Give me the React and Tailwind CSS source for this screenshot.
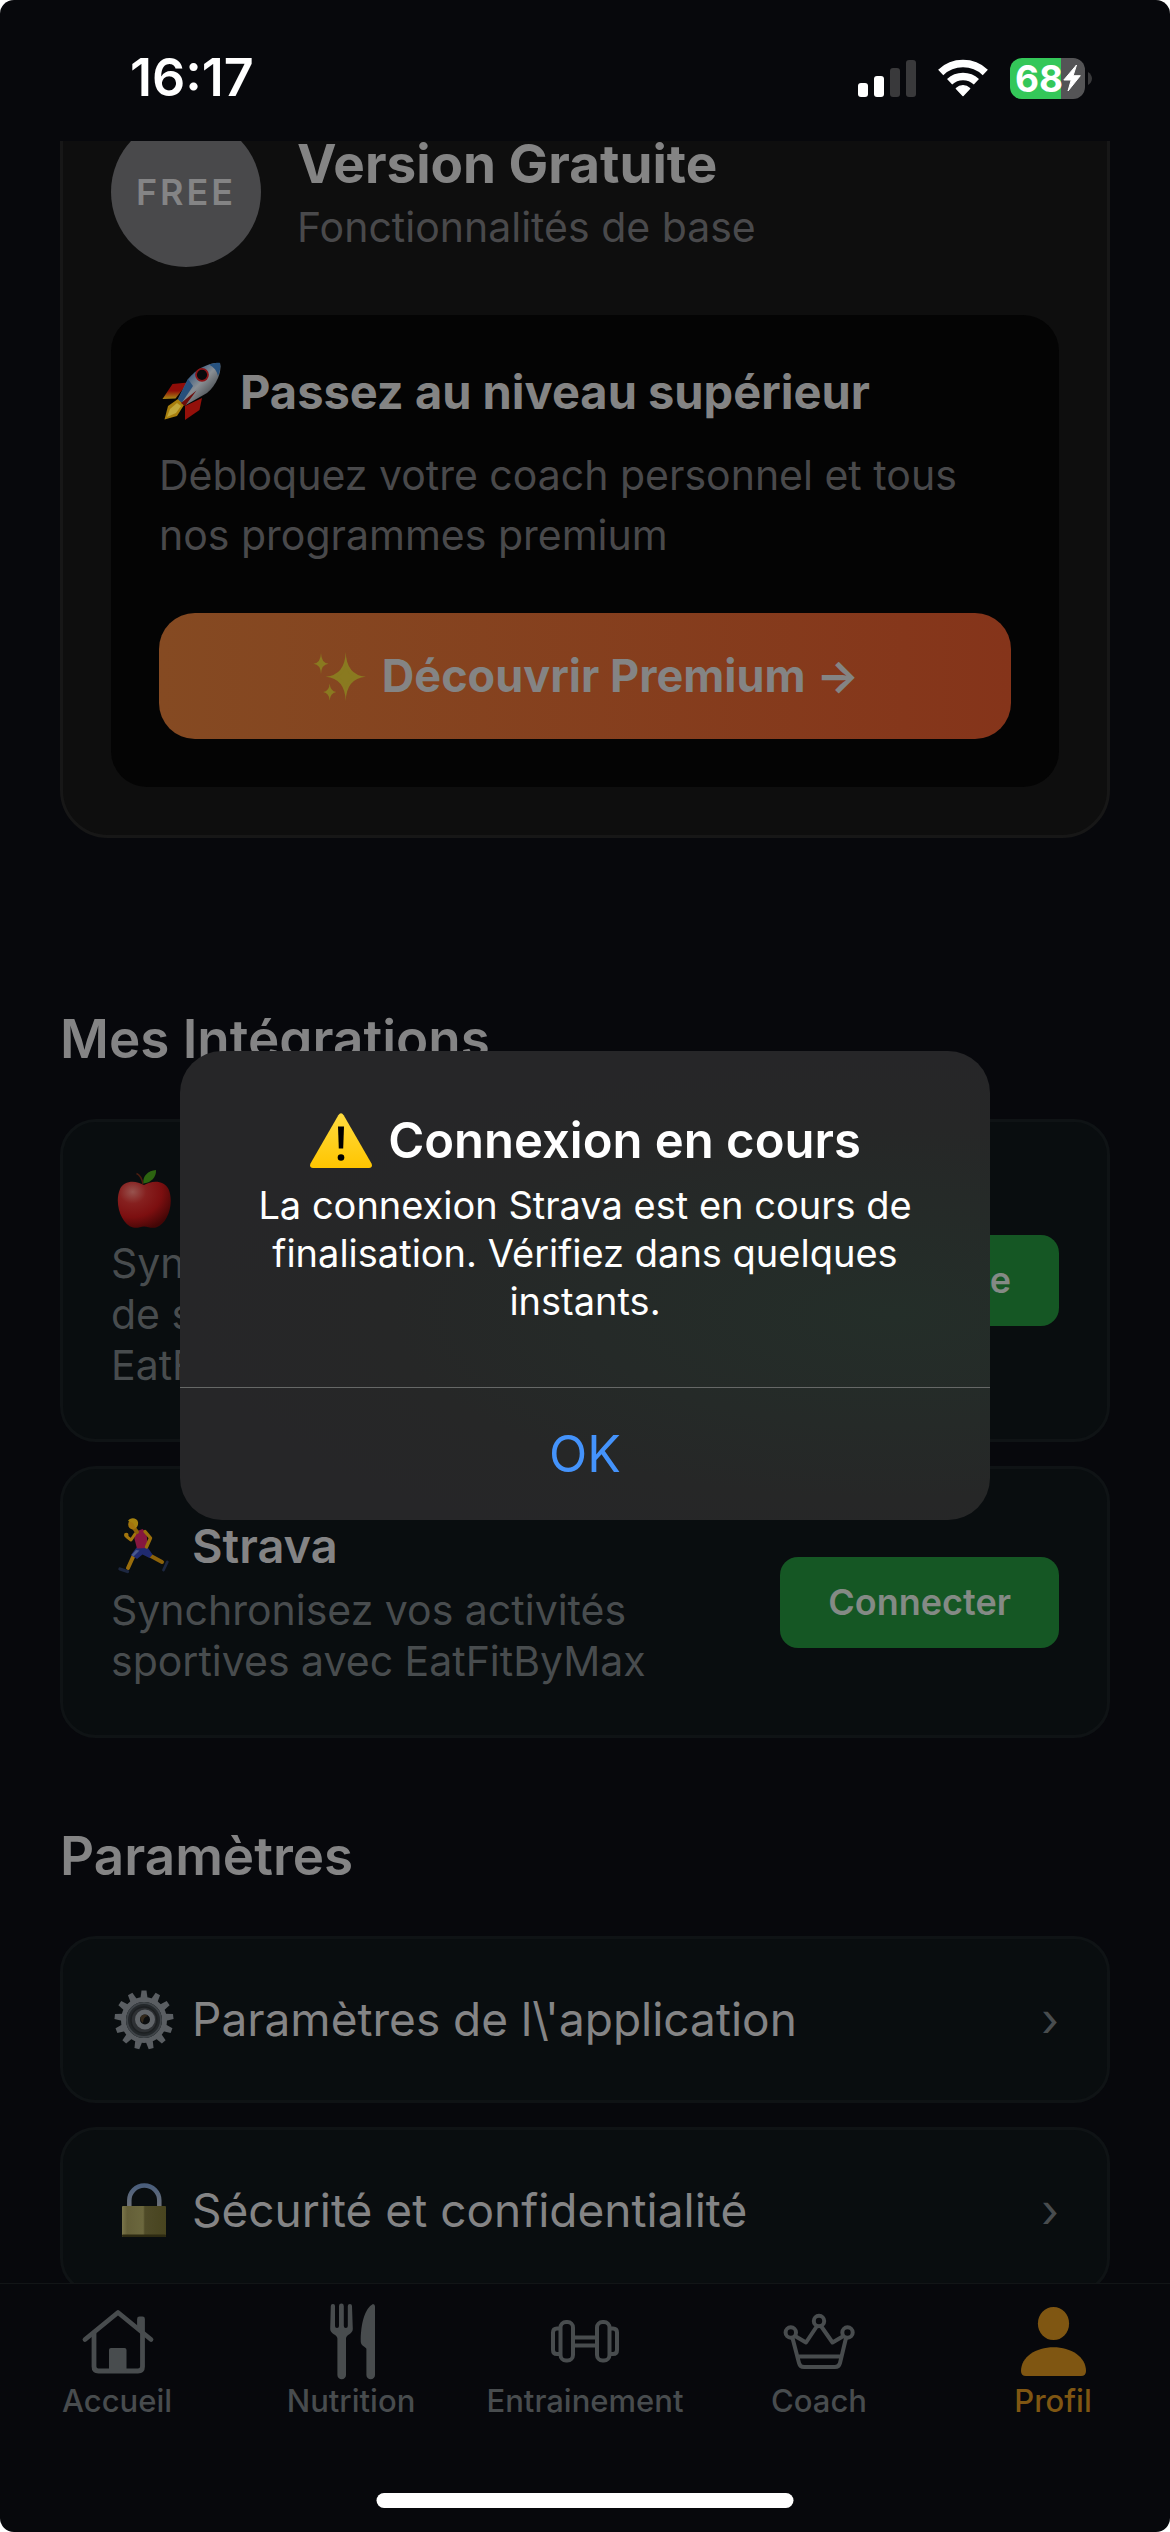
const TEETH = [0, 28, 55, 83, 111, 138, 166, 194, 222, 249, 277, 305, 332];

function SignalIcon() {
  return (
    <svg width="58" height="38" viewBox="0 0 58 38" fill="#fff" role="img" aria-label="Réseau">
      <rect x="0" y="24" width="10" height="14" rx="3" />
      <rect x="16" y="17" width="10" height="21" rx="3" />
      <rect x="32" y="9" width="10" height="29" rx="3" fill="#39393b" />
      <rect x="48" y="1" width="10" height="37" rx="3" fill="#39393b" />
    </svg>
  );
}

function WifiIcon() {
  return (
    <svg width="50" height="38" viewBox="0 0 50 38" fill="none" stroke="#fff" strokeWidth="7.5" role="img" aria-label="Wi-Fi">
      <path d="M2.7 13.4A32.5 32.5 0 0 1 47.3 13.4" />
      <path d="M11.6 22.8A19.5 19.5 0 0 1 38.4 22.8" />
      <path d="M25 36.4l-6.6-6.9a9.6 9.6 0 0 1 13.2 0z" fill="#fff" strokeWidth="1.5" strokeLinejoin="round" />
    </svg>
  );
}

function Battery() {
  return (
    <div className="flex items-center gap-[3px]" aria-label="Batterie 68 %">
      <div className="flex h-[41px] w-[75px] items-center justify-end rounded-[12px] bg-[linear-gradient(to_right,#34c759_68%,#545456_68%)] pr-1">
        <span className="text-[37px] leading-[41px] font-bold">68</span>
        <svg width="18" height="28" viewBox="0 0 18 28" fill="#fff" stroke="#fff" strokeWidth="1" strokeLinejoin="round">
          <path d="M13.5 1L.8 16h7.4L5 27 17.3 11.7h-7.2z" />
        </svg>
      </div>
      <svg width="4" height="13" viewBox="0 0 4 13" fill="#39393b">
        <path d="M0 0c2.500 1.500 4 4 4 6.500s-1.500 5-4 6.500z" />
      </svg>
    </div>
  );
}

function Rocket() {
  return (
    <svg width="64" height="60" viewBox="0 0 64 60" aria-hidden="true">
      <defs>
        <linearGradient id="rk-body" x1="0" y1="0" x2="1" y2="1">
          <stop offset=".25" stopColor="#2f547d" />
          <stop offset=".5" stopColor="#8a8f94" />
          <stop offset=".85" stopColor="#34383c" />
        </linearGradient>
        <linearGradient id="rk-fin" x1="0" y1="0" x2="0" y2="1">
          <stop offset=".5" stopColor="#8f0d08" />
          <stop offset="1" stopColor="#a88a14" />
        </linearGradient>
      </defs>
      <path d="M29 20.500L13.500 22 3.500 37l13-.5z" fill="url(#rk-fin)" />
      <path d="M43 36l-2.500 12L26 58V44z" fill="#94100a" />
      <path d="M19 37L9 44 5.500 57.500 18 54l7-11z" fill="#a87f0e" />
      <path d="M18 41l-7 6-3 8 9-4 5-7z" fill="#c2a93c" />
      <path d="M61 1C63 9 58 23 48 31L26 43.500 19 37 29 17C38 6 51 0 61 1z" fill="url(#rk-body)" />
      <path d="M50 2.500C55 1 60 .5 61 1c.8 4 0 9-2 13-1-5-4-9-9-11.500z" fill="#27527f" />
      <path d="M29 17l-10 20 4 3.500L34 24z" fill="#28507c" />
      <path d="M37.500 28.500L22 41l4 3z" fill="#6d0d0b" />
      <circle cx="43" cy="12.800" r="6" fill="#08090b" stroke="#8d1417" strokeWidth="1.800" />
    </svg>
  );
}

function Sparkles() {
  return (
    <svg width="56" height="50" viewBox="0 0 56 50" fill="#8a7a20" aria-hidden="true">
      <path d="M10 2q.3 10 7.500 10.700Q10.300 13.500 10 23 9.700 13.500 2.500 12.700 9.700 12 10 2z" />
      <path d="M34.700 1q.8 23 20 24.700Q35.500 27.500 34.700 50 34 27.500 14.700 25.700 34 24 34.700 1z" />
      <path d="M34.700 13q1.500 11 9 12.700-7.500 1.800-9 12-1.500-10.200-9-12 7.500-1.700 9-12.700z" />
      <path d="M18.700 32.500q.5 7.700 6.500 8.500-6 1-6.500 8.500-.5-7.500-6.500-8.500 6-.8 6.500-8.500z" />
    </svg>
  );
}

function Warning() {
  return (
    <svg width="64" height="58" viewBox="0 0 64 58" aria-hidden="true">
      <defs>
        <linearGradient id="wn" x1="0" y1="0" x2="0" y2="1">
          <stop offset="0" stopColor="#ffdc3f" />
          <stop offset="1" stopColor="#ffc500" />
        </linearGradient>
      </defs>
      <path d="M29.300 3.300q2.700-4 5.400 0L62.500 51.500q1.600 4-2.500 4.500H4q-4.100-.5-2.500-4.500z" fill="url(#wn)" />
      <path d="M29 14.500h6l-.8 22h-4.400z" fill="#000" />
      <circle cx="32" cy="45.500" r="3.300" fill="#000" />
    </svg>
  );
}

function Apple() {
  return (
    <svg width="64" height="58" viewBox="0 0 64 58" aria-hidden="true">
      <defs>
        <radialGradient id="ap" cx=".28" cy=".22" r=".85">
          <stop offset="0" stopColor="#97534e" />
          <stop offset=".3" stopColor="#86201f" />
          <stop offset=".65" stopColor="#7c0f10" />
          <stop offset="1" stopColor="#430606" />
        </radialGradient>
      </defs>
      <path d="M33 15C25 10 13 10 9 19c-6 14 1 35 13 38.500 5 1.200 7-1 11-1s7 2.200 12 1C57 54 63.500 33 57.500 19 53 10 41 10 33 15z" fill="url(#ap)" />
      <path d="M25.500 3.500C29 5 31 9 32 14" fill="none" stroke="#4a1d10" strokeWidth="1.500" />
      <path d="M32.300 13.500C31.500 6 37 .5 45 0c.5 7-5 13-12.700 13.500z" fill="#2c6410" />
    </svg>
  );
}

function Runner() {
  return (
    <svg width="64" height="58" viewBox="0 0 64 58" fill="none" strokeLinecap="round" strokeLinejoin="round" aria-hidden="true">
      <path d="M39 38.500L51 45" stroke="#8d6209" strokeWidth="4" />
      <path d="M22.500 39L17 51" stroke="#9a6d0b" strokeWidth="4" />
      <path d="M56.300 45L52.500 53" stroke="#1d2740" strokeWidth="2.800" />
      <path d="M9 52l7.500 2.500" stroke="#1d2740" strokeWidth="3.400" />
      <path d="M25.500 30.500L36 29.500l5.500 8-3 3.500-7-3.500-5.500 4.500-6-4z" fill="#1f2a70" />
      <path d="M25 33l-4.500 5 2 1.500 6-6z" fill="#4a5a90" />
      <path d="M23.500 15l8-3 4 3.500L36.500 27l-1.500 4-9 .5L23.500 22z" fill="#85173f" />
      <path d="M24 17l-4 6-4.500-3.500" stroke="#a3750d" strokeWidth="3" />
      <circle cx="15.300" cy="18" r="2.300" fill="#a3750d" />
      <path d="M34 14.500l5.500 6.500L35.500 30" stroke="#9a6d0b" strokeWidth="3.400" />
      <path d="M23 11l3 4" stroke="#8d6209" strokeWidth="4" />
      <ellipse cx="21.700" cy="7.500" rx="4.500" ry="5" fill="#a3750d" />
      <path d="M17 4c2-4 9-3.500 10 1 .5 3-1 5.500-2.500 6L22 6z" fill="#a5820f" />
    </svg>
  );
}

function Gear() {
  return (
    <svg width="64" height="60" viewBox="0 0 64 60" aria-hidden="true">
      <g fill="#5a5e62">
        {TEETH.map((a) => (
          <path key={a} d="M29.500 8l1-7.500h5l1 7.500z" transform={`rotate(${a} 33 30)`} />
        ))}
      </g>
      <circle cx="33" cy="30" r="20.500" fill="none" stroke="#5a5e62" strokeWidth="5" />
      <circle cx="33" cy="30" r="17" fill="#24282b" stroke="#3f4448" strokeWidth="2" />
      <circle cx="33" cy="30" r="13" fill="#2d3033" stroke="#1d2022" strokeWidth="1.500" />
      <circle cx="34" cy="29.500" r="7.500" fill="#0b0d0e" stroke="#62666a" strokeWidth="5" />
      <path d="M30 26q4-3 7 0-5 1-5 7-4-3-2-7z" fill="#33291b" />
    </svg>
  );
}

function Padlock() {
  return (
    <svg width="64" height="60" viewBox="0 0 64 60" aria-hidden="true">
      <defs>
        <linearGradient id="pl-body">
          <stop offset="0" stopColor="#7b764b" />
          <stop offset=".12" stopColor="#645f38" />
          <stop offset=".48" stopColor="#6c683e" />
          <stop offset=".52" stopColor="#4f4b28" />
          <stop offset="1" stopColor="#48441f" />
        </linearGradient>
        <linearGradient id="pl-ring" x1="0" y1="0" x2="0" y2="1">
          <stop offset="0" stopColor="#4a5e7c" />
          <stop offset="1" stopColor="#6f7277" />
        </linearGradient>
      </defs>
      <path d="M18.300 27V19.500a15 15 0 0 1 30 0V27" fill="none" stroke="url(#pl-ring)" strokeWidth="4.500" />
      <rect x="11" y="25" width="44" height="31" rx="1" fill="url(#pl-body)" />
      <rect x="11" y="53.500" width="44" height="2.500" rx="1" fill="#2d2a12" />
    </svg>
  );
}

function HomeIcon() {
  return (
    <svg width="80" height="80" viewBox="0 0 80 80" fill="none" stroke="currentColor" strokeWidth="4.800" strokeLinecap="round" strokeLinejoin="round" aria-hidden="true">
      <path d="M8 37.500L41 10.500 74 37.500" />
      <path d="M62.500 27V17h3v12.500" />
      <path d="M17 31v33.500q0 4.500 4.500 4.500h39.500q4.500 0 4.500-4.500V31" />
      <rect x="32" y="46" width="17.500" height="24" rx="2" fill="currentColor" stroke="none" />
    </svg>
  );
}

function CutleryIcon() {
  return (
    <svg width="80" height="80" viewBox="0 0 80 80" fill="currentColor" aria-hidden="true">
      <path d="M21.800 2a2 2 0 0 1 2.200 2v20q0 2 2 2t2-2V4a2.400 2.400 0 0 1 4.800 0v20q0 2 2 2t2-2V4a2 2 0 0 1 4.200 0l.8 23c0 5-6.800 5.500-6.800 9.500V73a4.300 4.300 0 0 1-8.600 0V36.500c0-4-7.200-4.500-7.200-9.500l.6-23a2 2 0 0 1 2-2z" />
      <path d="M62 2q2 0 2 2.500V73a4.300 4.300 0 0 1-8.600 0V47c0-2-5.600-3-5.600-7C49.500 22 54 6 62 2z" />
    </svg>
  );
}

function DumbbellIcon() {
  return (
    <svg width="80" height="80" viewBox="0 0 80 80" fill="none" stroke="currentColor" strokeWidth="4" strokeLinejoin="round" aria-hidden="true">
      <rect x="15.500" y="20" width="12.500" height="38.500" rx="5.500" />
      <rect x="52" y="20" width="12.500" height="38.500" rx="5.500" />
      <path d="M15.500 26.500H12q-4 0-4 4V48q0 4 4 4h3.500M64.500 26.500H68q4 0 4 4V48q0 4-4 4h-3.500" />
      <path d="M28 35.500h24M28 43.500h24" />
    </svg>
  );
}

function CrownIcon() {
  return (
    <svg width="80" height="80" viewBox="0 0 80 80" fill="none" stroke="currentColor" strokeWidth="4" strokeLinejoin="round" aria-hidden="true">
      <circle cx="40" cy="19" r="5.200" />
      <circle cx="11.800" cy="30.500" r="5.200" />
      <circle cx="68.500" cy="30.500" r="5.200" />
      <path d="M16 34l11 6.500L38 24M42 24l11.500 16.500 11-6.500" />
      <path d="M13.500 36l6.500 25q1 4 5 4h31q4 0 5-4l6-25M19.500 54.500h42" />
    </svg>
  );
}

function PersonIcon() {
  return (
    <svg width="80" height="80" viewBox="0 0 80 80" fill="currentColor" aria-hidden="true">
      <ellipse cx="40.500" cy="21.500" rx="15.600" ry="16.600" />
      <path d="M8 69C8 55 23 45.300 40.500 45.300S73 55 73 69q0 5-5 5H13q-5 0-5-5z" />
    </svg>
  );
}

function IntegrationCard({ icon, title, action, children }) {
  return (
    <article className="flex items-center justify-between gap-12 rounded-[36px] border-[3px] border-[#0f1315] bg-[#090d0f] p-12">
      <div>
        <h3 className="flex items-center gap-[17px] text-[47px] leading-[58px] font-semibold text-[#848485]">
          {icon}
          {title}
        </h3>
        <p className="mt-[10px] text-[41px] leading-[51px] text-[#484c4e]">{children}</p>
      </div>
      <button type="button" className="shrink-0 rounded-[18px] bg-[#155724] px-12 py-5 text-[36px] leading-[51px] font-semibold text-[#848a85]">
        {action}
      </button>
    </article>
  );
}

function SettingRow({ icon, label }) {
  return (
    <button type="button" className="flex w-full items-center gap-[17px] rounded-[36px] border-[3px] border-[#0f1315] bg-[#090d0f] p-12 text-left text-[46px] leading-[65px] text-[#848485]">
      {icon}
      <span className="flex-1">{label}</span>
      <span className="text-[#484c4e]" aria-hidden="true">›</span>
    </button>
  );
}

function TabItem({ icon, label, active }) {
  return (
    <a
      href="#"
      aria-current={active ? "page" : undefined}
      className={"flex flex-col items-center text-[31px] leading-[38px] font-medium " + (active ? "text-[#7f5612]" : "text-[#484c4e]")}
    >
      {icon}
      {label}
    </a>
  );
}

export default function App() {
  return (
    <div className="bg-white font-['Inter',sans-serif]">
      <div className="relative flex h-screen flex-col overflow-hidden rounded-[14px] bg-[#07080c] text-white">
        <header className="flex h-[141px] shrink-0 items-center justify-between pt-[15px] pr-[78px] pl-[130px]">
          <time className="text-[52px] leading-[64px] font-semibold">16:17</time>
          <div className="flex items-center gap-[22px]">
            <SignalIcon />
            <WifiIcon />
            <Battery />
          </div>
        </header>

        <main className="min-h-0 flex-1 overflow-hidden px-[60px]">
          <section className="-mt-[75px] rounded-[48px] border-[3px] border-[#171717] bg-[#0e0e0e] p-12">
            <div className="flex items-center gap-9">
              <div className="flex size-[150px] items-center justify-center rounded-full bg-[#49494b] text-[36px] font-semibold tracking-[3px] text-[#848485]">
                FREE
              </div>
              <div>
                <h2 className="text-[53px] leading-[64px] font-bold text-[#848484]">Version Gratuite</h2>
                <p className="mt-[6px] text-[41px] leading-[51px] text-[#49494b]">Fonctionnalités de base</p>
              </div>
            </div>
            <div className="mt-12 rounded-[36px] bg-[#040404] p-12">
              <h3 className="flex items-center gap-[17px] text-[47px] leading-[58px] font-bold text-[#848484]">
                <span className="-my-px">
                  <Rocket />
                </span>
                Passez au niveau supérieur
              </h3>
              <p className="mt-6 text-[41px] leading-[60px] text-[#49494b]">
                Débloquez votre coach personnel et tous nos programmes premium
              </p>
              <button
                type="button"
                className="mt-12 flex h-[126px] w-full items-center justify-center gap-[15px] rounded-[36px] bg-linear-to-r from-[#854a22] to-[#85341a] text-[45px] font-bold text-[#848484]"
              >
                <Sparkles />
                Découvrir Premium →
              </button>
            </div>
          </section>

          <section className="mt-[169px]">
            <h2 className="text-[53px] leading-[64px] font-semibold text-[#848485]">Mes Intégrations</h2>
            <div className="mt-12 flex flex-col gap-6">
              <IntegrationCard icon={<Apple />} title="Apple Santé" action="Disponible">
                Synchronisez vos données
                <br />
                de santé avec
                <br />
                EatFitByMax
              </IntegrationCard>
              <IntegrationCard icon={<Runner />} title="Strava" action="Connecter">
                Synchronisez vos activités sportives avec EatFitByMax
              </IntegrationCard>
            </div>
          </section>

          <section className="mt-[86px]">
            <h2 className="text-[53px] leading-[64px] font-semibold text-[#848485]">Paramètres</h2>
            <div className="mt-12 flex flex-col gap-6">
              <SettingRow icon={<Gear />} label={"Paramètres de l\\'application"} />
              <SettingRow icon={<Padlock />} label="Sécurité et confidentialité" />
            </div>
          </section>
        </main>

        <nav className="grid h-[249px] shrink-0 grid-cols-5 content-start border-t border-[#121517] pt-[18px]">
          <TabItem icon={<HomeIcon />} label="Accueil" />
          <TabItem icon={<CutleryIcon />} label="Nutrition" />
          <TabItem icon={<DumbbellIcon />} label="Entrainement" />
          <TabItem icon={<CrownIcon />} label="Coach" />
          <TabItem icon={<PersonIcon />} label="Profil" active />
        </nav>

        <div className="absolute inset-0 flex items-center justify-center pt-[39px]">
          <div
            role="alertdialog"
            aria-labelledby="alert-title"
            aria-describedby="alert-text"
            className="w-[810px] rounded-[42px] bg-[#262628] bg-[radial-gradient(ellipse_at_88%_56%,#242e29_0%,#252a28_30%,#262727_50%,#262628_70%)] text-center"
          >
            <div className="px-12 pt-[60px] pb-[62px]">
              <h2 id="alert-title" className="flex items-center justify-center gap-[15px] text-[49px] leading-[60px] font-semibold">
                <Warning />
                Connexion en cours
              </h2>
              <p id="alert-text" className="mt-[10px] text-[38px] leading-[48px]">
                La connexion Strava est en cours de finalisation. Vérifiez dans quelques instants.
              </p>
            </div>
            <button type="button" className="h-[133px] w-full border-t border-[#666867] text-[50px] text-[#4493fb]">
              OK
            </button>
          </div>
        </div>

        <div className="absolute bottom-6 left-1/2 h-[15px] w-[417px] -translate-x-1/2 rounded-full bg-white" />
      </div>
    </div>
  );
}
